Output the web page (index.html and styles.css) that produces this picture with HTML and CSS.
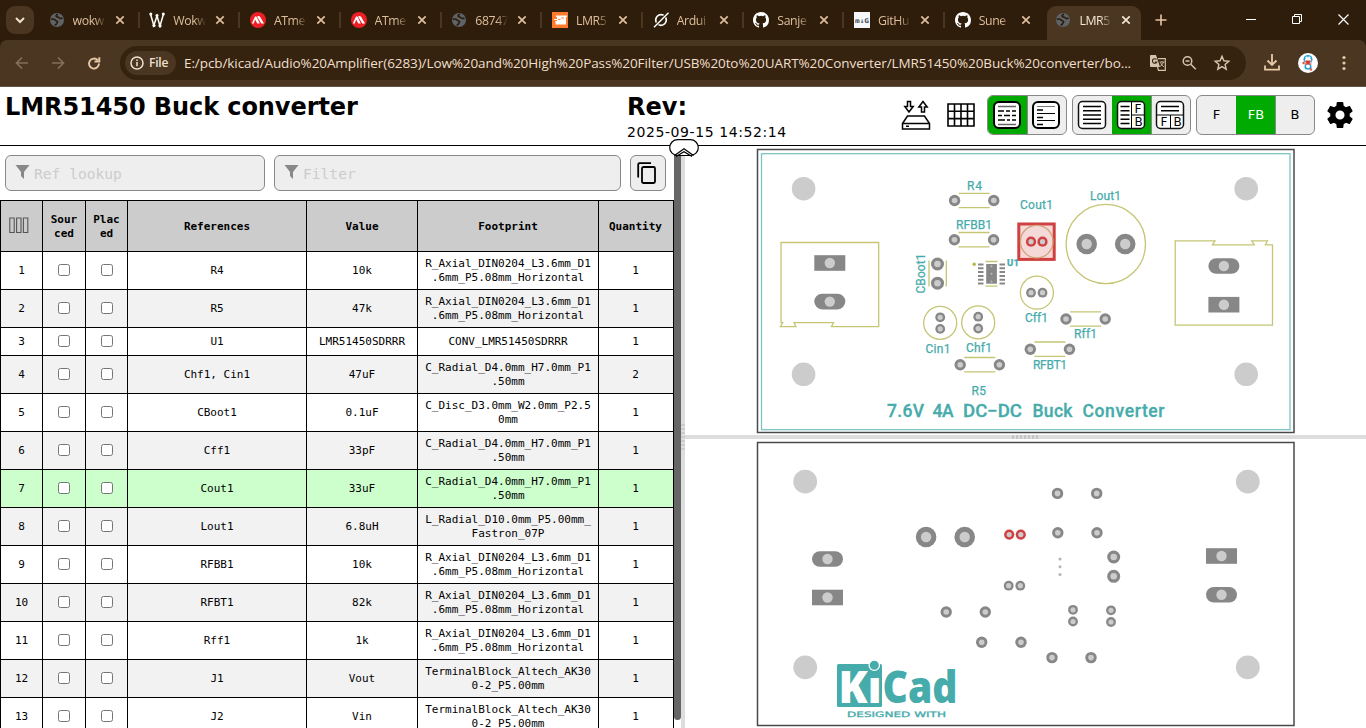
FILE: index.html
```html
<!DOCTYPE html>
<html lang="en">
<head>
<meta charset="utf-8">
<title>LMR51450 Buck converter</title>
<link rel="stylesheet" href="styles.css">
</head>
<body>
<svg class="defs" width="0" height="0">
  <defs>
    <symbol id="globe" viewBox="0 0 16 16"><circle cx="8" cy="8" r="7" fill="#5f6368"/><path d="M1.800 7.400c1.500-.5 3.400-.4 4.200.5.500 1 1.800.6 2.500 1.500.500.9-.6 1.300-1 2.300-.2.900-.9 1.300-2 1.300M9 2.300c-1.800.400-2.500 1.900-1.200 2.500 1 .5 1.900 0 2.500 1.100.500.800 1.800.900 3.200.200" fill="none" stroke="#2e1d0a" stroke-width="1.700"/></symbol>
    <symbol id="x" viewBox="0 0 10 10"><path d="M1.300 1.300l7.400 7.400M8.700 1.300l-7.400 7.400" stroke="currentColor" stroke-width="1.700"/></symbol>
    <symbol id="chip" viewBox="0 0 16 16"><circle cx="8" cy="8" r="8" fill="#ec1f24"/><path d="M1.800 11.500L4.800 5Q5.700 3.500 6.700 5L9.800 11.500H7.200L5.200 7.500 3.700 11.500zM7 4.600Q8.500 3.200 9.900 4.600L14 11.500H11.300z" fill="#fff"/></symbol>
    <symbol id="github" viewBox="0 0 16 16"><path fill="#fff" d="M8 0C3.580 0 0 3.580 0 8c0 3.540 2.290 6.530 5.470 7.590.4.070.55-.17.55-.38v-1.490c-2.010.37-2.530-.49-2.690-.94-.09-.23-.48-.94-.82-1.130-.28-.15-.68-.52-.01-.53.63-.01 1.080.58 1.230.82.720 1.210 1.870.87 2.330.66.070-.52.280-.87.510-1.070-1.780-.2-3.640-.89-3.640-3.950 0-.87.310-1.590.82-2.150-.08-.2-.36-1.020.08-2.120 0 0 .67-.21 2.200.82a7.600 7.600 0 0 1 4 0c1.530-1.040 2.200-.82 2.200-.82.44 1.100.160 1.920.08 2.120.51.560.82 1.270.82 2.150 0 3.070-1.870 3.750-3.650 3.950.29.250.54.730.54 1.480v2.200c0 .21.150.46.550.38A8 8 0 0 0 16 8c0-4.420-3.580-8-8-8z"/></symbol>
    <g id="pad"><circle r="5.700" fill="#878787"/><circle r="2.800" fill="#ccc"/></g>
    <g id="padm"><circle r="6.500" fill="#878787"/><circle r="3.300" fill="#ccc"/></g>
    <g id="pads"><circle r="4.900" fill="#878787"/><circle r="2.600" fill="#ccc"/></g>
    <g id="padr"><circle r="5.100" fill="#d04040"/><circle r="2.600" fill="#ccc"/></g>
    <g id="padl"><circle r="10.300" fill="#878787"/><circle r="5.200" fill="#ccc"/></g>
    <g id="sq"><rect x="-15.500" y="-7.800" width="31" height="15.600" fill="#878787"/><circle r="5.200" fill="#ccc"/></g>
    <g id="ov"><rect x="-15.500" y="-7.800" width="31" height="15.600" rx="7.800" fill="#878787"/><circle r="5.200" fill="#ccc"/></g>
    <g id="res"><path d="M-15.500-7.200h31M-15.500 7.200h31" stroke="#c5c573" stroke-width="1.300"/><use href="#pad" x="-19.600"/><use href="#pad" x="19.600"/></g>
  </defs>
</svg>

<div class="tabs">
  <div class="tabsearch"><svg width="10" height="8" viewBox="0 0 10 8"><path d="M1 2l4 4 4-4" fill="none" stroke="#f0e0cc" stroke-width="2"/></svg></div>
  <div class="tab"><svg class="fav"><use href="#globe"/></svg><span>wokw</span><svg class="cl"><use href="#x"/></svg></div>
  <div class="tab"><svg class="fav" viewBox="0 0 16 16"><path d="M1.500 2l3.300 11.500L8 4l3 10L14.500 2" fill="none" stroke="#fff" stroke-width="1.500"/><g fill="#fff"><circle cx="1.800" cy="2" r="1.500"/><circle cx="5" cy="13.500" r="1.600"/><circle cx="8" cy="3.500" r="1.500"/><circle cx="11" cy="13.800" r="1.600"/><circle cx="14.300" cy="2" r="1.500"/></g></svg><span>Wokw</span><svg class="cl"><use href="#x"/></svg></div>
  <div class="tab"><svg class="fav"><use href="#chip"/></svg><span>ATme</span><svg class="cl"><use href="#x"/></svg></div>
  <div class="tab"><svg class="fav"><use href="#chip"/></svg><span>ATme</span><svg class="cl"><use href="#x"/></svg></div>
  <div class="tab"><svg class="fav"><use href="#globe"/></svg><span>68747</span><svg class="cl"><use href="#x"/></svg></div>
  <div class="tab"><svg class="fav" viewBox="0 0 16 16"><rect width="16" height="16" fill="#ff7a2b"/><path d="M4 3.500h11V5h-1v7.500H3.500V9H5V8H2V7h3V5H4z" fill="#fff"/><path d="M6 7.500h2.500M9.500 6H12" stroke="#ff7a2b"/></svg><span>LMR5</span><svg class="cl"><use href="#x"/></svg></div>
  <div class="tab"><svg class="fav" viewBox="0 0 16 16"><circle cx="8" cy="8" r="5.300" fill="none" stroke="#fff" stroke-width="1.700"/><path d="M12.500 3.500L3.500 12.500" stroke="#2e1d0a" stroke-width="3"/><path d="M15.500 .8L1 15.300" stroke="#fff" stroke-width="1.400"/></svg><span>Ardui</span><svg class="cl"><use href="#x"/></svg></div>
  <div class="tab"><svg class="fav"><use href="#github"/></svg><span>Sanje</span><svg class="cl"><use href="#x"/></svg></div>
  <div class="tab"><svg class="fav" viewBox="0 0 16 16"><rect width="16" height="16" fill="#f6f7fa"/><text x="1" y="10.500" font-size="6.500" font-weight="700" font-family="DejaVu Sans Mono" fill="#444b5c" textLength="14" lengthAdjust="spacingAndGlyphs">m↓G</text></svg><span>GitHu</span><svg class="cl"><use href="#x"/></svg></div>
  <div class="tab nosep"><svg class="fav"><use href="#github"/></svg><span>Sune</span><svg class="cl"><use href="#x"/></svg></div>
  <div class="tab active"><svg class="fav"><use href="#globe"/></svg><span>LMR5</span><svg class="cl"><use href="#x"/></svg></div>
  <svg class="plus" width="12" height="12" viewBox="0 0 12 12"><path d="M6 .5v11M.5 6h11" stroke="#e6c5a4" stroke-width="1.600"/></svg>
  <div class="wctl">
    <svg width="10" height="10" viewBox="0 0 10 10"><path d="M0 5.500h10" stroke="#fff"/></svg>
    <svg width="11" height="11" viewBox="0 0 11 11"><path d="M.5 2.500h7v7h-7zM2.500 2.500v-2h7v7h-2" fill="none" stroke="#fff"/></svg>
    <svg width="11" height="11" viewBox="0 0 11 11"><path d="M.5.5l10 10M10.500.5l-10 10" stroke="#fff" stroke-width="1.200"/></svg>
  </div>
</div>

<div class="navwrap"><div class="nav">
  <svg class="navi" width="100" height="16" viewBox="0 0 100 16" fill="none" stroke-width="1.700"><path d="M14 8H3M8 2.500L2.500 8 8 13.500M38 8h11M44 2.500L49.500 8 44 13.500" stroke="#84705a"/><path d="M83.700 5.200A5 5 0 1 0 85 8.600M85.300 2.200v4.300h-4.800" stroke="#e8c9a8" stroke-width="1.900"/></svg>
  <div class="omni">
    <div class="chiplet"><svg width="14" height="14" viewBox="0 0 14 14"><circle cx="7" cy="7" r="6" fill="none" stroke="#f0e2d2" stroke-width="1.500"/><path d="M7 6v4.300M7 3.500v1.500" stroke="#f0e2d2" stroke-width="1.500"/></svg>File</div>
    <div class="url">E:/pcb/kicad/Audio%20Amplifier(6283)/Low%20and%20High%20Pass%20Filter/USB%20to%20UART%20Converter/LMR51450%20Buck%20converter/bo...</div>
    <svg class="oi" width="84" height="18" viewBox="0 0 84 18" fill="none" stroke="#d8c3ac" stroke-width="1.500"><path d="M2 1h5l4 12H2q-1 0-1-1V2q0-1 1-1z" fill="#d8c3ac" stroke="none"/><path d="M9 4.700h7.300v11.600H9.500L8.500 13" stroke-width="1.200"/><path d="M7.500 5.500A2.300 2.300 0 1 0 7.800 8H5.800" stroke="#35230f" stroke-width="1.100"/><path d="M10.500 8h5M13 7v1M14.500 8q-1 3-3.500 4.500M11.500 8.500q1 3 3.500 4.500" stroke-width=".9"/><circle cx="38.500" cy="7" r="4.300"/><path d="M41.800 10.300l5 5M36.500 7h4"/><path d="M73 2.300l1.900 4.500 4.900.4-3.700 3.200 1.100 4.800-4.200-2.600-4.200 2.600 1.100-4.800-3.700-3.200 4.900-.4z" stroke-width="1.400"/></svg>
  </div>
  <svg class="dl" width="16" height="17" viewBox="0 0 16 17" fill="none" stroke="#e8c9a8" stroke-width="1.800"><path d="M8 0v10.500M3.500 6.500L8 11l4.500-4.500M1 11.500V15.700h14V11.500"/></svg>
  <svg class="ava" width="20" height="20" viewBox="0 0 20 20"><circle cx="10" cy="10" r="10" fill="#fff"/><circle cx="10" cy="6.500" r="4.500" fill="#1f9fd8"/><ellipse cx="10" cy="7.800" rx="3.200" ry="3" fill="#fff"/><circle cx="8.700" cy="4.800" r="1.300" fill="#fff"/><circle cx="11.300" cy="4.800" r="1.300" fill="#fff"/><path d="M7 7.500h6q-1 3.500-3 3.500t-3-3.500z" fill="#d83a2a"/><rect x="6.500" y="11" width="7" height="5.500" rx="2.500" fill="#1f9fd8"/><circle cx="10" cy="13.300" r="2" fill="#fff"/><path d="M6.500 11h7" stroke="#d83a2a"/><circle cx="5.500" cy="10" r="1.200" fill="#dd574b"/><circle cx="13" cy="16.500" r="1.200" fill="#dd574b"/></svg>
  <svg class="dots" width="4" height="16" viewBox="0 0 4 16" fill="#e8c9a8"><circle cx="2" cy="2.500" r="1.600"/><circle cx="2" cy="8" r="1.600"/><circle cx="2" cy="13.500" r="1.600"/></svg>
</div></div>

<header class="head">
  <h1 class="title">LMR51450 Buck converter</h1>
  <div class="rev"><b>Rev:</b><span>2025-09-15 14:52:14</span></div>
  <div class="tools">
    <svg width="32" height="32" viewBox="0 0 32 32" fill="none" stroke="#000" stroke-width="1.500"><path d="M7.500 2.500h3v5h2.700L9 13 4.800 7.500h2.700zM21.500 13v-5h-2.700L23 2.500 27.200 8h-2.700v5z"/><path d="M2.500 24.500l5-7.500h17l5 7.500V30h-27zM2.500 24.500h27M6 27.300h3" /></svg>
    <svg class="gridico" width="28" height="24" viewBox="0 0 28 24" fill="none" stroke="#000" stroke-width="1.600"><path d="M1 1h26v22H1zM1 8.300h26M1 15.600h26M7.500 1v22M14 1v22M20.500 1v22"/></svg>
    <div class="seg">
      <i class="on"><svg width="30" height="30" viewBox="0 0 30 30"><rect x="2" y="2" width="26" height="26" rx="5" fill="#fff" stroke="#000" stroke-width="2"/><path d="M6 6.500h18M6 24.500h18" stroke="#666" stroke-width="1.600"/><path d="M6 11h6M14 11h4M20 11h4M6 15.500h4M12 15.500h6M20 15.500h4M6 20h7M15 20h3M20 20h4" stroke="#000" stroke-width="1.700"/></svg></i>
      <i><svg width="30" height="30" viewBox="0 0 30 30"><rect x="2" y="2" width="26" height="26" rx="5" fill="#fff" stroke="#000" stroke-width="2"/><path d="M6 6.500h18" stroke="#777"/><path d="M6 10h6M6 17.500h6M6 24.500h6" stroke="#000" stroke-width="1.700"/><path d="M6 13.500h18M6 20.500h18" stroke="#000" stroke-width="1"/></svg></i>
    </div>
    <div class="seg">
      <i><svg width="30" height="30" viewBox="0 0 30 30"><rect x="1.500" y="1.500" width="27" height="27" rx="4" fill="#fff" stroke="#111" stroke-width="1.500"/><path d="M6 6.500h18M6 10.700h18M6 15h18M6 19.300h18M6 23.500h18" stroke="#000" stroke-width="1.400"/></svg></i>
      <i class="on"><svg width="30" height="30" viewBox="0 0 30 30"><rect x="1.500" y="1.500" width="27" height="27" rx="4" fill="#fff" stroke="#111" stroke-width="1.500"/><path d="M15.500 2v26M15.500 15h13" stroke="#000"/><path d="M4.500 6.500h9M4.500 10.700h9M4.500 15h9M4.500 19.300h9M4.500 23.500h9" stroke="#000" stroke-width="1.400"/><text x="18.500" y="13" class="fb">F</text><text x="18.500" y="25.500" class="fb">B</text></svg></i>
      <i><svg width="30" height="30" viewBox="0 0 30 30"><rect x="1.500" y="1.500" width="27" height="27" rx="4" fill="#fff" stroke="#111" stroke-width="1.500"/><path d="M2 15h26M15.500 15v13" stroke="#000"/><path d="M6 6.500h18M6 10.700h18" stroke="#000" stroke-width="1.400"/><text x="5.500" y="26" class="fb">F</text><text x="18.500" y="25.500" class="fb">B</text></svg></i>
    </div>
    <div class="seg txt"><i>F</i><i class="on">FB</i><i>B</i></div>
    <svg class="gear" width="26" height="26" viewBox="2 2 20 20"><path d="M19.430 12.980c.04-.32.070-.64.070-.98s-.03-.66-.07-.98l2.110-1.650c.19-.15.240-.42.120-.64l-2-3.460c-.12-.22-.39-.3-.61-.22l-2.490 1c-.52-.4-1.080-.73-1.690-.98l-.38-2.650A.488.488 0 0 0 14 2h-4c-.25 0-.46.180-.49.420l-.38 2.650c-.61.250-1.170.59-1.690.98l-2.490-1c-.23-.09-.49 0-.61.220l-2 3.460c-.13.220-.07.49.120.64l2.110 1.650c-.04.320-.07.650-.07.980s.03.660.07.980l-2.110 1.650c-.19.150-.24.420-.12.640l2 3.460c.12.220.39.300.61.220l2.490-1c.52.400 1.080.730 1.690.980l.38 2.650c.03.240.24.420.49.420h4c.25 0 .46-.18.490-.42l.38-2.650c.61-.25 1.170-.59 1.690-.98l2.490 1c.23.090.49 0 .61-.22l2-3.460c.12-.22.070-.49-.12-.64l-2.110-1.650zM12 15.500a3.500 3.500 0 1 1 0-7 3.500 3.500 0 0 1 0 7z"/></svg>
  </div>
  <svg class="collapse" width="30" height="18" viewBox="0 0 30 18"><rect x=".7" y=".7" width="28.600" height="15.800" rx="7.900" fill="#fff" stroke="#000" stroke-width="1.200"/><path d="M5.500 16.500L15 9.700l9.500 6.800M7 17.500L15 12.700l8 4.800" fill="none" stroke="#000" stroke-width="1.200"/></svg>
</header>

<main class="main">
  <section class="bom">
    <div class="filters">
      <div class="fld ref"><svg width="15" height="14" viewBox="0 0 15 14"><path d="M.5 0h14L9 7v7L6 11V7z" fill="#888"/></svg>Ref lookup</div>
      <div class="fld flt"><svg width="15" height="14" viewBox="0 0 15 14"><path d="M.5 0h14L9 7v7L6 11V7z" fill="#888"/></svg>Filter</div>
      <div class="fld copy"><svg width="20" height="22" viewBox="0 0 20 22" fill="none" stroke="#000" stroke-width="1.800"><rect x="5" y="5" width="13" height="16" rx="1.500"/><path d="M1.200 15.500V2.500q0-1.300 1.300-1.300H14"/></svg></div>
    </div>
    <div class="grid">
      <div class="row hd"><div><svg width="20" height="17" viewBox="0 0 20 17" fill="none" stroke="#555" stroke-width="1.100"><path d="M.8 1h4.400v14.500H.8zM7.600 1H12v14.500H7.600zM14.400 1h4.400v14.500h-4.400z"/></svg></div><div>Sourced</div><div>Placed</div><div>References</div><div>Value</div><div>Footprint</div><div>Quantity</div></div>
      <div class="row"><div>1</div><div><b></b></div><div><b></b></div><div>R4</div><div>10k</div><div>R_Axial_DIN0204_L3.6mm_D1<br>.6mm_P5.08mm_Horizontal</div><div>1</div></div>
      <div class="row"><div>2</div><div><b></b></div><div><b></b></div><div>R5</div><div>47k</div><div>R_Axial_DIN0204_L3.6mm_D1<br>.6mm_P5.08mm_Horizontal</div><div>1</div></div>
      <div class="row short"><div>3</div><div><b></b></div><div><b></b></div><div>U1</div><div>LMR51450SDRRR</div><div>CONV_LMR51450SDRRR</div><div>1</div></div>
      <div class="row"><div>4</div><div><b></b></div><div><b></b></div><div>Chf1, Cin1</div><div>47uF</div><div>C_Radial_D4.0mm_H7.0mm_P1<br>.50mm</div><div>2</div></div>
      <div class="row"><div>5</div><div><b></b></div><div><b></b></div><div>CBoot1</div><div>0.1uF</div><div>C_Disc_D3.0mm_W2.0mm_P2.5<br>0mm</div><div>1</div></div>
      <div class="row"><div>6</div><div><b></b></div><div><b></b></div><div>Cff1</div><div>33pF</div><div>C_Radial_D4.0mm_H7.0mm_P1<br>.50mm</div><div>1</div></div>
      <div class="row sel"><div>7</div><div><b></b></div><div><b></b></div><div>Cout1</div><div>33uF</div><div>C_Radial_D4.0mm_H7.0mm_P1<br>.50mm</div><div>1</div></div>
      <div class="row"><div>8</div><div><b></b></div><div><b></b></div><div>Lout1</div><div>6.8uH</div><div>L_Radial_D10.0mm_P5.00mm_<br>Fastron_07P</div><div>1</div></div>
      <div class="row"><div>9</div><div><b></b></div><div><b></b></div><div>RFBB1</div><div>10k</div><div>R_Axial_DIN0204_L3.6mm_D1<br>.6mm_P5.08mm_Horizontal</div><div>1</div></div>
      <div class="row"><div>10</div><div><b></b></div><div><b></b></div><div>RFBT1</div><div>82k</div><div>R_Axial_DIN0204_L3.6mm_D1<br>.6mm_P5.08mm_Horizontal</div><div>1</div></div>
      <div class="row"><div>11</div><div><b></b></div><div><b></b></div><div>Rff1</div><div>1k</div><div>R_Axial_DIN0204_L3.6mm_D1<br>.6mm_P5.08mm_Horizontal</div><div>1</div></div>
      <div class="row"><div>12</div><div><b></b></div><div><b></b></div><div>J1</div><div>Vout</div><div>TerminalBlock_Altech_AK30<br>0-2_P5.00mm</div><div>1</div></div>
      <div class="row"><div>13</div><div><b></b></div><div><b></b></div><div>J2</div><div>Vin</div><div>TerminalBlock_Altech_AK30<br>0-2_P5.00mm</div><div>1</div></div>
    </div>
  </section>
  <div class="scroll"><div class="thumb"></div></div>
  <div class="gutter v"><span></span></div>
  <section class="boards">
    <svg class="board" viewBox="685 146 681 289">
      <rect x="757.500" y="149.500" width="536.500" height="283" fill="none" stroke="#4a4a4c" stroke-width="1.500"/>
      <rect x="761.500" y="153.700" width="528.500" height="276" fill="none" stroke="#7cc4c4" stroke-width="1.300"/>
      <g fill="#ccc"><circle cx="803.600" cy="188.700" r="11.800"/><circle cx="1246.200" cy="188.700" r="11.800"/><circle cx="803.600" cy="374.300" r="11.800"/><circle cx="1246.200" cy="374.300" r="11.800"/></g>
      <g fill="none" stroke="#c5c573" stroke-width="1.300">
        <path d="M781 242.500h97.700v84.200H831.500l2-4h-39.500l2 4h-15.500l2.200-4H781zM1175.200 240.800h39.800l-2.500 4h41.700l-2.500-4h15.700l-2 4h7.100v80.300h-97.300z"/>
        <circle cx="1105.800" cy="244" r="39.700"/><circle cx="1036.900" cy="292.700" r="16.500"/><circle cx="940.200" cy="322.900" r="16.500"/><circle cx="978.200" cy="322.400" r="16.500"/>
        <path d="M929 260.500v26M946.300 260.500v26M985.500 261.500h12M985.500 286.200h12"/>
      </g>
      <rect x="1018.800" y="224" width="35.400" height="35.400" fill="#f5d8d8" stroke="#d04040" stroke-width="3"/>
      <circle cx="1036.700" cy="241.600" r="16.300" fill="none" stroke="#d1a476" stroke-width="1.300"/>
      <use href="#padr" x="1031" y="241.700"/><use href="#padr" x="1042.500" y="241.700"/>
      <use href="#res" x="974.200" y="200.500"/><use href="#res" x="974" y="239.700"/><use href="#res" x="1085.600" y="319"/><use href="#res" x="1049.900" y="349.200"/><use href="#res" x="979.800" y="364.700"/>
      <use href="#padm" x="937.500" y="264"/><use href="#padm" x="937.500" y="283.200"/>
      <use href="#padl" x="1086.700" y="244"/><use href="#padl" x="1125.200" y="244"/>
      <use href="#pads" x="1031" y="292.700"/><use href="#pads" x="1042.500" y="292.700"/>
      <use href="#pads" x="940.200" y="317.300"/><use href="#pads" x="940.200" y="328.900"/><use href="#pads" x="978.200" y="316.700"/><use href="#pads" x="978.200" y="328.500"/>
      <use href="#sq" x="829.800" y="263"/><use href="#ov" x="829.800" y="301.600"/><use href="#ov" x="1223.900" y="266"/><use href="#sq" x="1223.900" y="304.700"/>
      <rect x="986.200" y="264" width="10.700" height="19.700" fill="#878787"/>
      <path d="M978 264.500h5.500M978 268.300h5.500M978 272.100h5.500M978 275.900h5.500M978 279.700h5.500M978 283.500h5.500M999.500 264.500h5.500M999.500 268.300h5.500M999.500 272.100h5.500M999.500 275.900h5.500M999.500 279.700h5.500M999.500 283.500h5.500" stroke="#878787" stroke-width="2"/>
      <g fill="#bbb"><circle cx="991.500" cy="266.200" r="1"/><circle cx="991.500" cy="273.800" r="1"/><circle cx="991.500" cy="281.500" r="1"/></g>
      <circle cx="974.200" cy="264.200" r="1.700" fill="#b5b54c"/>
      <g class="silk">
        <text x="967" y="189.500" textLength="15">R4</text><text x="956" y="229" textLength="36">RFBB1</text><text x="1020" y="208.500" textLength="33">Cout1</text><text x="1090" y="200" textLength="31">Lout1</text>
        <text x="1007" y="266" textLength="12" font-size="9.500" font-weight="700">U1</text><text x="1025" y="322" textLength="23">Cff1</text><text x="1074" y="338" textLength="23">Rff1</text><text x="1033" y="368.500" textLength="34">RFBT1</text><text x="925.500" y="352.500" textLength="25">Cin1</text><text x="966" y="352" textLength="26">Chf1</text><text x="971.500" y="395" textLength="14.500">R5</text>
        <text transform="translate(924.500 293.500) rotate(-90)" textLength="40">CBoot1</text>
      </g>
      <g class="silkbig"><text x="887" y="416.500" textLength="37">7.6V</text><text x="932.500" y="416.500" textLength="21">4A</text><text x="963" y="416.500" textLength="59" lengthAdjust="spacingAndGlyphs">DC−DC</text><text x="1032.500" y="416.500" textLength="40">Buck</text><text x="1082.500" y="416.500" textLength="82">Converter</text></g>
    </svg>
    <div class="gutter h"><span></span></div>
    <svg class="board" viewBox="685 439 681 289">
      <rect x="757.500" y="442.500" width="536.500" height="283" fill="none" stroke="#4a4a4c" stroke-width="1.500"/>
      <g fill="#ccc"><circle cx="805.200" cy="481.700" r="11.900"/><circle cx="1247.800" cy="481.700" r="11.900"/><circle cx="805.200" cy="667.300" r="11.900"/><circle cx="1247.800" cy="667.300" r="11.900"/></g>
      <use href="#padl" x="926.100" y="537"/><use href="#padl" x="964.700" y="537"/>
      <use href="#padr" x="1009.200" y="534.600"/><use href="#padr" x="1020.800" y="534.600"/>
      <use href="#pads" x="1008.700" y="585.700"/><use href="#pads" x="1020.300" y="585.700"/>
      <use href="#ov" x="827.500" y="559"/><use href="#sq" x="827.500" y="597.500"/><use href="#sq" x="1221.500" y="556"/><use href="#ov" x="1221.500" y="594.700"/>
      <use href="#pad" x="946.200" y="612"/><use href="#pad" x="985.300" y="612"/><use href="#pad" x="981.700" y="642.200"/><use href="#pad" x="1021" y="642.200"/>
      <use href="#pad" x="1057.500" y="493.400"/><use href="#pad" x="1096.700" y="493.400"/><use href="#pad" x="1057.800" y="532.700"/><use href="#pad" x="1097" y="532.700"/>
      <use href="#padm" x="1113.700" y="557"/><use href="#padm" x="1113.700" y="576.300"/>
      <use href="#pads" x="1073" y="609.800"/><use href="#pads" x="1073" y="621.500"/><use href="#pads" x="1111" y="610.300"/><use href="#pads" x="1111" y="622"/>
      <use href="#pad" x="1052" y="657.600"/><use href="#pad" x="1091" y="657.600"/>
      <g fill="#b4b4b4"><circle cx="1060" cy="559" r="1.500"/><circle cx="1060" cy="566.800" r="1.500"/><circle cx="1060" cy="574.500" r="1.500"/></g>
      <rect x="837" y="664" width="45" height="43" rx="1.500" fill="#46abab"/>
      <text class="kl" x="838.500" y="702.500" font-size="45" textLength="43" lengthAdjust="spacingAndGlyphs" fill="#fff">Ki</text>
      <rect x="868" y="665" width="12.500" height="11.500" fill="#46abab"/>
      <circle cx="874.300" cy="665.200" r="5.200" fill="#46abab" stroke="#fff" stroke-width="1.300"/>
      <text class="kl" x="882.500" y="702.500" font-size="44.500" textLength="75" lengthAdjust="spacingAndGlyphs" fill="#46abab">Cad</text>
      <text x="847" y="717" font-size="7.500" font-family="DejaVu Sans" stroke="#46abab" stroke-width=".3" textLength="99" lengthAdjust="spacingAndGlyphs" fill="#46abab">DESIGNED WITH</text>
    </svg>
  </section>
</main>
</body>
</html>
```

FILE: styles.css
```css
* { box-sizing: border-box; }
body { margin: 0; width: 1366px; height: 728px; overflow: hidden; display: flex; flex-direction: column; background: #fff; color: #000; font-family: "DejaVu Sans", Verdana, sans-serif; }
svg { display: block; flex: none; }
.defs { position: absolute; }

/* browser frame */
.tabs { height: 40px; flex: none; background: #2e1d0a; display: flex; align-items: flex-end; color: #dfbf9e; }
.tabsearch { width: 28px; height: 28px; margin: 0 5px 6px 6px; border-radius: 9px; background: #4a3621; display: flex; align-items: center; justify-content: center; }
.tab { width: 100.700px; height: 34px; padding: 0 0 6px 9.500px; display: flex; align-items: center; flex: none; background: linear-gradient(#4a3621, #4a3621) 98.500px 6px / 2px 16px no-repeat; }
.tab.nosep { background: none; }
.fav { width: 16px; height: 16px; }
.tab span { width: 33px; margin: 0 9px 0 8px; white-space: nowrap; font: 12.300px "Open Sans", sans-serif; letter-spacing: -.4px; -webkit-mask-image: linear-gradient(90deg, #000 65%, transparent); mask-image: linear-gradient(90deg, #000 65%, transparent); }
.cl { width: 10px; height: 10px; }
.tab.active { width: 94px; margin-left: 1px; padding-left: 8.500px; background: #4a3621; border-radius: 9px 9px 0 0; color: #f6e6d6; }
.plus { margin: 0 0 14px 14px; }
.wctl { margin: 0 17px 15px auto; display: flex; gap: 35.500px; }
.navwrap { background: #2e1d0a; flex: none; }
.nav { height: 47px; background: #4a3621; border-bottom: 1px solid #635445; display: flex; align-items: center; padding-bottom: 1px; border-radius: 7px 7px 0 0; }
.navi { margin-left: 14px; }
.omni { width: 1126px; height: 34px; margin-left: 6px; border-radius: 17px; background: #35230f; display: flex; align-items: center; padding-left: 5px; }
.chiplet { width: 51px; height: 24px; border-radius: 12px; background: #4a3621; color: #f0e2d2; display: flex; align-items: center; padding-left: 5px; gap: 5px; font: 600 12px "Open Sans", sans-serif; letter-spacing: -.2px; }
.url { width: 956px; margin-left: 8px; white-space: nowrap; font: 13.500px "Open Sans", sans-serif; letter-spacing: -.09px; color: #efdfcc; }
.oi { margin-left: 9px; }
.dl { margin-left: 18px; }
.ava { margin-left: 18px; }
.dots { margin-left: 24px; }

/* page header */
.head { height: 59px; flex: none; border-bottom: 1px solid #000; display: flex; position: relative; }
.title { margin: 4px 0 0 5px; width: 622px; font-size: 24px; line-height: 32px; letter-spacing: -.08px; white-space: nowrap; }
.rev { width: 270px; padding-top: 4px; display: flex; flex-direction: column; }
.rev b { font-size: 24px; line-height: 32px; }
.rev span { font-size: 14px; line-height: 18px; letter-spacing: .58px; white-space: nowrap; }
.tools { display: flex; align-items: center; height: 40px; margin-top: 8px; }
.tools > svg:first-child { margin-left: 3px; }
.gridico { margin: 0 12px 0 15px; }
.seg { height: 40px; border: 1px solid #888; border-radius: 6px; background: #eee; display: flex; overflow: hidden; margin-right: 5px; }
.seg i { width: 39px; display: flex; align-items: center; justify-content: center; font: 13px "DejaVu Sans", sans-serif; border-left: 1px solid #888; padding-right: 2px; }
.seg i:first-child { border-left: 0; padding-right: 1px; }
.seg.txt i { width: 39px; padding: 0 0 2px; }
.seg .on { background: #0a0; }
.seg i.on { border-color: #0a0; color: #fff; }
.fb { font: 12px "DejaVu Sans", sans-serif; }
.gear { margin-left: 7px; }
.collapse { position: absolute; left: 669px; top: 52px; z-index: 2; }

/* bill of materials */
.main { flex: 1; min-height: 0; display: flex; }
.bom { width: 674px; overflow: hidden; }
.filters { display: flex; padding: 9px 0 9px 5px; }
.fld { height: 36px; border: 1px solid #888; border-radius: 6px; background: #eee; display: flex; padding: 0 0 0 8.500px; align-items: center; font: 14.600px "DejaVu Sans Mono", monospace; color: #ccc; }
.fld svg { margin: 0 4.500px 3px 0; }
.ref { width: 260px; margin-right: 9px; }
.flt { width: 347px; margin-right: 9px; }
.copy { width: 36px; padding-left: 6px; }
.copy svg { margin: 0 0 1px; }
.grid { border-left: 1px solid #000; border-top: 1px solid #000; }
.row { display: grid; grid-template-columns: 42px 43px 42px 179px 111px 181px 75px; height: 38px; background: #fff; font: 11px/14px "DejaVu Sans Mono", monospace; text-align: center; }
.row:nth-child(odd) { background: #f2f2f2; }
.row > div { border-right: 1px solid #000; border-bottom: 1px solid #000; display: flex; align-items: center; justify-content: center; padding: 0 7px; word-break: break-all; min-width: 0; }
.row > div:nth-child(6) { display: block; padding: 5px 0 0; white-space: nowrap; }
.row > div:last-child { padding-right: 8px; }
.row.short { height: 28px; }
.row.short > div:nth-child(6) { padding-top: 7px; }
.row.sel { background: #cfc; }
.row.hd { height: 51px; background: #ccc; font-weight: 700; }
.row.hd > div { padding-top: 1px; }
.row.hd > div:first-child { padding: 0 12px 2px 6px; }
.row.hd > div:nth-child(6) { padding-top: 19px; }
.row b { width: 12px; height: 12px; border: 1px solid #767676; border-radius: 2.500px; background: #fff; flex: none; margin-bottom: 1px; }

.scroll { width: 7px; background: #fff; }
.thumb { height: 574px; background: #666; border-radius: 0 0 4px 4px; }
.gutter { background: #ddd; display: flex; align-items: center; justify-content: center; flex: none; }
.gutter.v { width: 4px; }
.gutter.v span { width: 4px; height: 27px; background: repeating-linear-gradient(#ccc 0 2px, #ddd 2px 4px); }
.gutter.h { height: 4px; }
.gutter.h span { width: 27px; height: 4px; background: repeating-linear-gradient(90deg, #c4c4c4 0 2px, #ddd 2px 4px); }

/* board views */
.boards { flex: 1; display: flex; flex-direction: column; }
.board { width: 681px; height: 289px; }
.silk { font-family: Roboto, "Noto Sans", sans-serif; font-size: 12px; fill: #46abab; stroke: #46abab; stroke-width: .25px; }
.silkbig { font-family: Roboto, "Noto Sans", sans-serif; font-size: 17.500px; font-weight: 500; fill: #46abab; stroke: #46abab; stroke-width: .3px; }
.kl { font-family: "Open Sans", sans-serif; font-weight: 800; }
```
